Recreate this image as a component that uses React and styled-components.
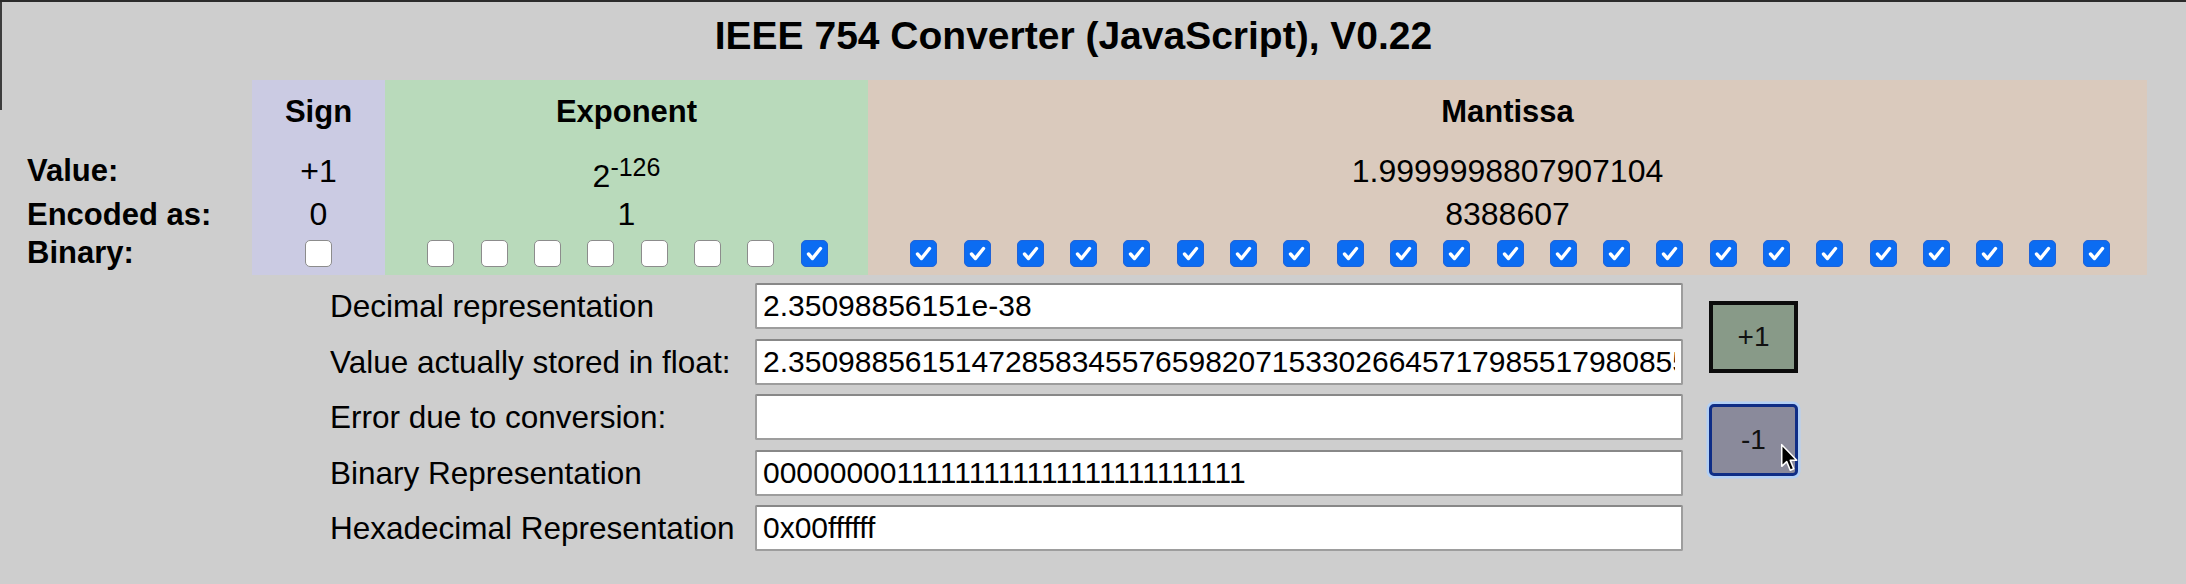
import React from "react";
import styled, { createGlobalStyle } from "styled-components";

const Global = createGlobalStyle`
  html, body { margin: 0; padding: 0; background: #cecece; }
  body { font-family: "Liberation Sans", Arial, Helvetica, sans-serif; color: #000; }
  #root { width: 2186px; }
`;

const Page = styled.div`
  position: relative;
  width: 2186px;
  height: 584px;
  box-sizing: border-box;
  border-top: 2px solid #2b2b2b;
  background: #cecece;
  overflow: hidden;
  &::before {
    content: "";
    position: absolute;
    left: 0;
    top: 0;
    width: 2px;
    height: 108px;
    background: #3c3c3c;
  }
`;

const Content = styled.div`
  width: 2147px;
`;

const Title = styled.h1`
  margin: 0;
  height: 78px;
  box-sizing: border-box;
  padding-top: 11px;
  font-size: 39px;
  line-height: 46px;
  font-weight: 700;
  text-align: center;
  white-space: nowrap;
`;

const Table = styled.div`
  display: grid;
  grid-template-columns: 252px 133px 483px 1279px;
`;

const Column = styled.div`
  display: flex;
  flex-direction: column;
  background: ${(p) => p.$bg || "transparent"};
  padding-left: ${(p) => p.$inset || 0}px;
`;

const Cell = styled.div`
  height: ${(p) => p.$h}px;
  line-height: ${(p) => p.$h}px;
  font-size: ${(p) => (p.$bold ? 31 : 32)}px;
  font-weight: ${(p) => (p.$bold ? 700 : 400)};
  text-align: ${(p) => (p.$left ? "left" : "center")};
  white-space: nowrap;
`;

const Base = styled.span`
  line-height: 1;
  vertical-align: -5px;
`;

const Sup = styled.span`
  font-size: 25px;
  line-height: 1;
  vertical-align: 6px;
`;

const Bits = styled.div`
  height: 44px;
  display: flex;
  align-items: center;
  justify-content: center;
  gap: 26.3px;
  padding-left: ${(p) => p.$shift || 0}px;
`;

const Box = styled.span`
  width: 27px;
  height: 27px;
  box-sizing: border-box;
  border-radius: 5px;
  flex: none;
  display: flex;
  align-items: center;
  justify-content: center;
  background: ${(p) => (p.$on ? "#0b6cf2" : "#ffffff")};
  border: ${(p) => (p.$on ? "1px solid #1f63d8" : "1.5px solid #8c8c8c")};
`;

const Form = styled.div`
  display: grid;
  grid-template-columns: 425px 928px 115px;
  grid-auto-rows: 46px;
  row-gap: 9.6px;
  margin: 8px 0 0 330px;
`;

const Label = styled.div`
  font-size: 31.5px;
  line-height: 46px;
  white-space: nowrap;
`;

const Field = styled.input`
  width: 928px;
  height: 46px;
  box-sizing: border-box;
  margin: 0;
  padding: 0 6px;
  border: 2px solid #9d9d9d;
  border-top-color: #888;
  border-radius: 2px;
  background: #fff;
  font-family: "Liberation Sans", Arial, sans-serif;
  font-size: 30px;
  color: #000;
  outline: none;
`;

const Buttons = styled.div`
  grid-column: 3;
  grid-row: 1 / span 5;
  display: flex;
  flex-direction: column;
  padding: 18px 0 0 26px;
  gap: 31px;
`;

const StepButton = styled.button`
  position: relative;
  width: 89px;
  height: 72px;
  box-sizing: border-box;
  margin: 0;
  padding: 0;
  font-family: "Liberation Sans", Arial, sans-serif;
  font-size: 28px;
  line-height: 1;
  color: #111;
  background: ${(p) => (p.$focus ? "#8a8a9b" : "#889a88")};
  border: ${(p) => (p.$focus ? "3px solid #0f2d86" : "4px solid #0c0c0c")};
  border-radius: ${(p) => (p.$focus ? "5px" : "0")};
  box-shadow: ${(p) => (p.$focus ? "0 0 0 2.5px #b3d0f5" : "none")};
`;

const Cursor = styled.svg`
  position: absolute;
  left: 68px;
  top: 36px;
  width: 19px;
  height: 30px;
`;

const Check = () => (
  <svg width="19" height="19" viewBox="0 0 19 19">
    <path d="M3.5 10 L7.5 14.5 L15.5 4.5" fill="none" stroke="#fff" strokeWidth="3.4" strokeLinecap="round" strokeLinejoin="round" />
  </svg>
);

const Bit = ({ on }) => <Box $on={on}>{on && <Check />}</Box>;

const H = { head: 64, value: 54, enc: 33 };

const expBits = [0, 0, 0, 0, 0, 0, 0, 1];
const manBits = Array.from({ length: 23 }, () => 1);

const rows = [
  ["Decimal representation", "2.35098856151e-38"],
  ["Value actually stored in float:", "2.350988561514728583455765982071533026645717985517980855365926236850006129930346077117064851336181163787841796875E-38"],
  ["Error due to conversion:", ""],
  ["Binary Representation", "00000000111111111111111111111111"],
  ["Hexadecimal Representation", "0x00ffffff"],
];

export default function App() {
  return (
    <>
      <Global />
      <Page>
        <Content>
          <Title>IEEE 754 Converter (JavaScript), V0.22</Title>
          <Table>
            <Column $inset={27}>
              <Cell $h={H.head} />
              <Cell $h={H.value} $bold $left>Value:</Cell>
              <Cell $h={H.enc} $bold $left>Encoded as:</Cell>
              <Cell $h={44} $bold $left>Binary:</Cell>
            </Column>
            <Column $bg="#cbcbe3">
              <Cell $h={H.head} $bold>Sign</Cell>
              <Cell $h={H.value}>+1</Cell>
              <Cell $h={H.enc}>0</Cell>
              <Bits><Bit on={false} /></Bits>
            </Column>
            <Column $bg="#b9dabb">
              <Cell $h={H.head} $bold>Exponent</Cell>
              <Cell $h={H.value}>
                <Base>2</Base>
                <Sup>-126</Sup>
              </Cell>
              <Cell $h={H.enc}>1</Cell>
              <Bits $shift={2}>
                {expBits.map((b, i) => (
                  <Bit key={i} on={!!b} />
                ))}
              </Bits>
            </Column>
            <Column $bg="#dacabd">
              <Cell $h={H.head} $bold>Mantissa</Cell>
              <Cell $h={H.value}>1.9999998807907104</Cell>
              <Cell $h={H.enc}>8388607</Cell>
              <Bits $shift={5}>
                {manBits.map((b, i) => (
                  <Bit key={i} on={!!b} />
                ))}
              </Bits>
            </Column>
          </Table>
          <Form>
            {rows.map(([label, value]) => (
              <React.Fragment key={label}>
                <Label>{label}</Label>
                <Field readOnly value={value} />
              </React.Fragment>
            ))}
            <Buttons>
              <StepButton>+1</StepButton>
              <StepButton $focus>
                -1
                <Cursor viewBox="0 0 17 27">
                  <path d="M1.5 1.5 L1.5 21 L6 16.8 L9.2 24.5 L12.3 23.2 L9.2 15.6 L15 15.6 Z" fill="#000" stroke="#fff" strokeWidth="1.4" strokeLinejoin="round" />
                </Cursor>
              </StepButton>
            </Buttons>
          </Form>
        </Content>
      </Page>
    </>
  );
}
